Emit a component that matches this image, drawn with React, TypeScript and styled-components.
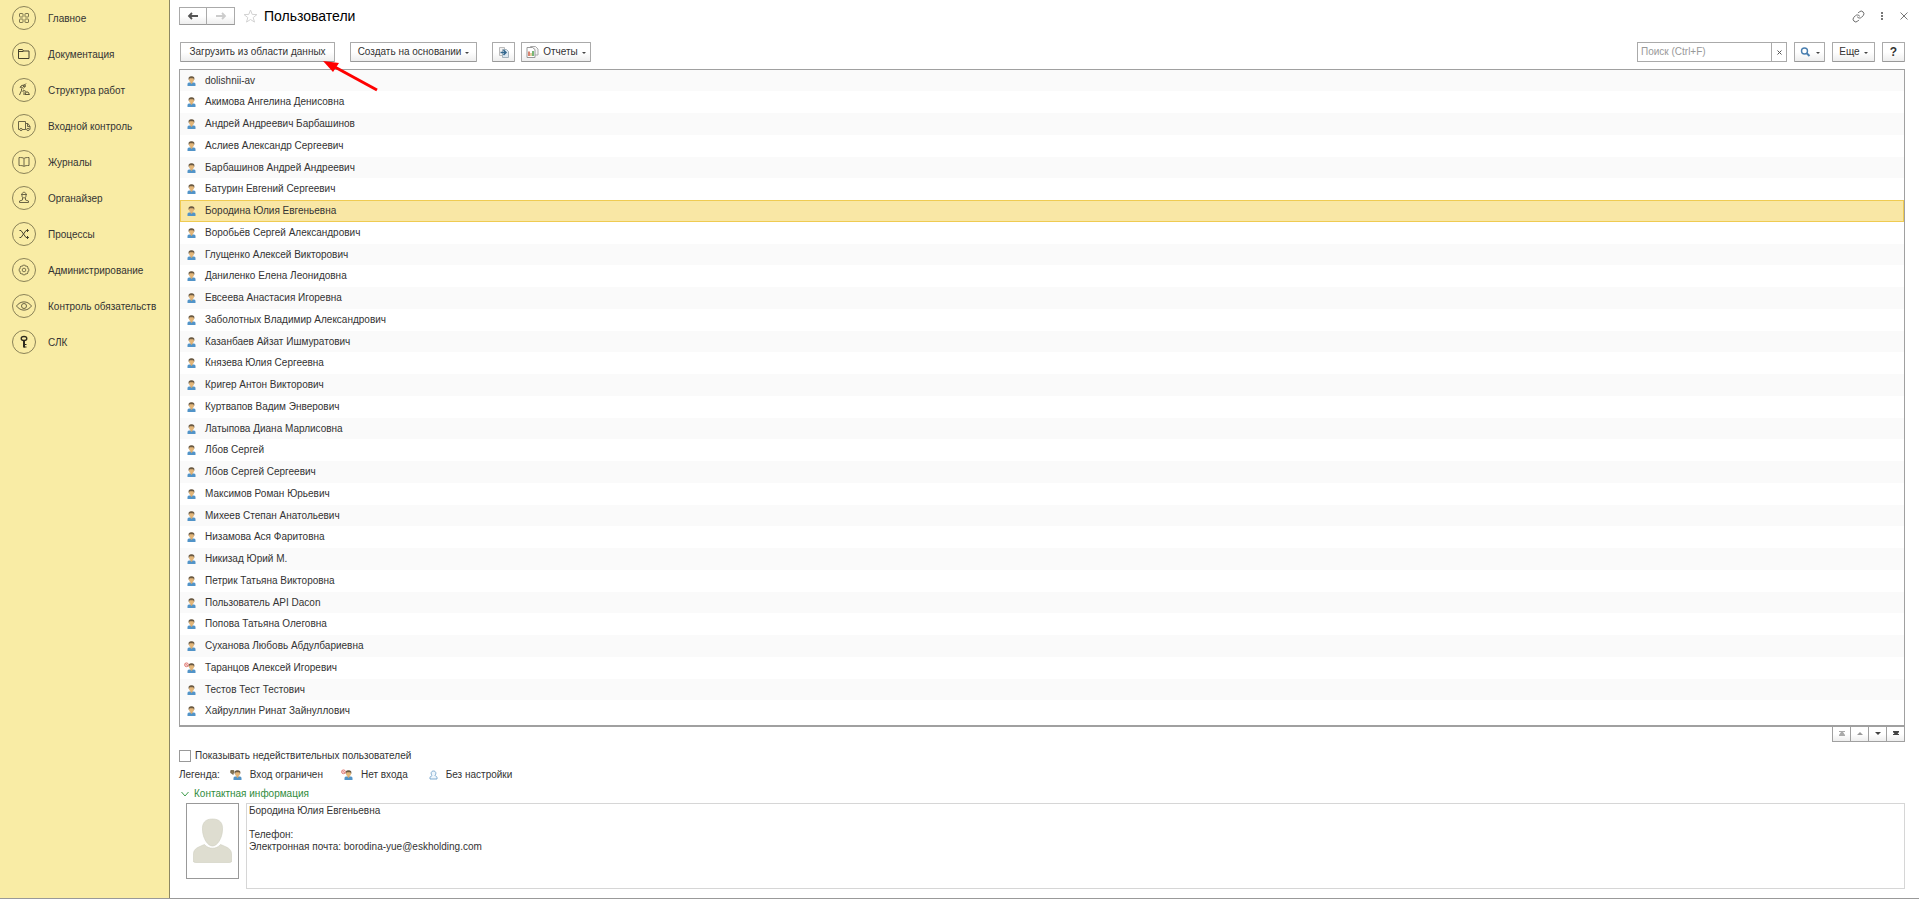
import React from 'react';
import styled, { createGlobalStyle, css } from 'styled-components';
import { Link } from 'lucide-react';

const GlobalStyle = createGlobalStyle`
  * { box-sizing: border-box; }
  body { margin: 0; background: #fff; }
  body, button, input, textarea { font: 10px/12px "Liberation Sans", Arial, sans-serif; color: #333; }
`;

const Page = styled.div`
  display: flex;
  min-height: 100vh;
  border-bottom: 1px solid #999;
`;

const Sidebar = styled.nav`
  flex: 0 0 170px;
  background: #f9eca5;
  border-right: 1px solid #8c8763;
`;

const MenuLink = styled.a`
  display: flex;
  align-items: center;
  gap: 12px;
  height: 36px;
  padding-left: 12px;
  color: #333;
  text-decoration: none;
  white-space: nowrap;
`;

const MenuIcon = styled.svg`
  flex: none;
  width: 24px;
  height: 24px;
  fill: none;
  stroke: #6b6546;
  stroke-width: 1;
`;

const MenuText = styled.span`
  padding-top: 2px;
`;

const Main = styled.main`
  flex: 1;
  min-width: 0;
  display: flex;
  flex-direction: column;
  padding: 7px 14px 9px 9px;
`;

const Header = styled.header`
  display: flex;
  align-items: center;
  height: 18px;
`;

const raised = css`
  border: 1px solid #aaa;
  border-bottom-color: #999;
  background: linear-gradient(#fff 50%, #eee);
  padding: 0;
`;

const NavGroup = styled.div`
  display: flex;
  margin-right: 8px;
`;

const NavButton = styled.button`
  ${raised}
  display: grid;
  place-items: center;
  width: 28px;
  height: 18px;
  & + & { border-left: 0; }
`;

const Plain = styled.button`
  display: grid;
  place-items: center;
  border: 0;
  padding: 0;
  background: none;
`;

const Title = styled.h1`
  flex: 1;
  margin: 0 0 0 6px;
  font-size: 14px;
  line-height: 18px;
  font-weight: 400;
  color: #000;
`;

const WindowTools = styled.div`
  display: flex;
  align-items: center;
  gap: 12px;
  margin-right: -4px;
`;

const Toolbar = styled.div`
  position: relative;
  display: flex;
  align-items: center;
  height: 20px;
  margin: 17px 0 7px 1px;
`;

const ToolButton = styled.button<{ $w: number; $gap?: number }>`
  ${raised}
  display: flex;
  align-items: center;
  justify-content: center;
  gap: 4px;
  width: ${p => p.$w}px;
  height: 20px;
  margin-right: ${p => p.$gap ?? 0}px;
  border-radius: 1px;
  white-space: nowrap;
`;

const Help = styled.span`
  font-size: 12px;
  font-weight: 700;
`;

const Caret = styled.span`
  width: 0;
  margin-top: 2px;
  border: 2px solid transparent;
  border-top-color: #444;
  border-bottom: 0;
`;

const Search = styled.div`
  display: flex;
  width: 150px;
  height: 20px;
  margin: 0 7px 0 auto;
  border: 1px solid #aaa;
`;

const SearchInput = styled.input`
  flex: 1;
  min-width: 0;
  border: 0;
  padding: 0 3px;
  outline: 0;
  &::placeholder { color: #999; opacity: 1; }
`;

const Clear = styled(Plain)`
  width: 15px;
  border-left: 1px solid #aaa;
`;

const Pointer = styled.svg`
  position: absolute;
  left: 143px;
  top: 18px;
  width: 56px;
  height: 32px;
  pointer-events: none;
`;

const List = styled.div`
  border: 1px solid #a0a0a0;
  border-bottom-width: 2px;
  padding-bottom: 3px;
`;

const Table = styled.table`
  width: 100%;
  border-collapse: collapse;
`;

const Row = styled.tr<{ $selected: boolean }>`
  height: 22px;
  &:nth-child(4n + 1) { height: 21px; }
  &:nth-child(odd) { background: #fafafa; }
  ${p => p.$selected && css`
    && { background: #f9e7a5; box-shadow: inset 0 0 0 1px #efcb52; }
  `}
`;

const IconCell = styled.td`
  width: 25px;
  padding: 0 0 0 4px;
  line-height: 0;
`;

const NameCell = styled.td`
  padding: 0;
`;

const Pager = styled.div`
  display: flex;
  align-self: flex-end;
  height: 15px;
`;

const PageButton = styled.button`
  ${raised}
  border-color: #a0a0a0;
  border-top: 0;
  display: grid;
  place-items: center;
  width: 19px;
  height: 15px;
  & + & { margin-left: -1px; }
`;

const CheckLabel = styled.label`
  display: flex;
  align-items: center;
  gap: 4px;
  height: 12px;
  margin-top: 8px;
`;

const Check = styled.input`
  appearance: none;
  width: 12px;
  height: 12px;
  margin: 0;
  border: 1px solid #999;
  background: #fff;
`;

const Legend = styled.div`
  display: flex;
  align-items: center;
  height: 14px;
  margin-top: 6px;
`;

const LegendItem = styled.span`
  display: flex;
  align-items: center;
  gap: 7px;
  margin-left: 10px;
  & + & { margin-left: 18px; }
`;

const Section = styled.button`
  display: flex;
  align-items: center;
  align-self: flex-start;
  gap: 5px;
  height: 14px;
  margin-top: 5px;
  padding: 0 0 0 2px;
  border: 0;
  background: none;
  color: #2f8c3c;
`;

const Contact = styled.section`
  flex: 1;
  display: flex;
  gap: 7px;
  padding: 2px 0 0 7px;
`;

const Photo = styled.div`
  width: 53px;
  height: 76px;
  border: 1px solid #999;
  display: grid;
  place-items: center;
`;

const Details = styled.textarea`
  flex: 1;
  min-height: 86px;
  padding: 1px 2px;
  border: 1px solid #d6d6d6;
  resize: none;
  outline: 0;
`;

const menu: [string, React.ReactNode][] = [
  ['Главное', <g key="i" stroke="#7d764f"><rect x="7.500" y="7.500" width="3.500" height="3.500" rx=".5" /><rect x="13" y="7.500" width="3.500" height="3.500" rx=".5" /><rect x="7.500" y="13" width="3.500" height="3.500" rx=".5" /><rect x="13" y="13" width="3.500" height="3.500" rx=".5" /></g>],
  ['Документация', <path key="i" stroke="#45412d" d="M6.500 7.500h4l1 1.500h5.500v7.500H6.500zM6.500 9.500h5" />],
  ['Структура работ', <g key="i" stroke="#5d573a"><path d="M8 10l1.500-2.500 3-.5 1.500-1.500M8.500 8.500l3 2M11 8.500l2 .5M9.500 10.500v2l-2 4.500M10 12.500l2 2v2.500M11 12l3 1.500M13 16.500l1-2.500h2l1.500 2.500z" /><circle cx="12.500" cy="8" r="1" /></g>],
  ['Входной контроль', <g key="i"><path d="M8 15.500H6.500v-8h7v8h-3.500M13.500 9.500h2.500l2 3v3h-.5M13.500 15.500h1" /><circle cx="9" cy="15.500" r="1.200" /><circle cx="16" cy="15.500" r="1.200" /><path d="M15.500 10v2.500H18" /></g>],
  ['Журналы', <path key="i" d="M12 8.500v7.500M12 8.500c-1-1-3-1-5-1v8c2 0 4 0 5 1 1-1 3-1 5-1v-8c-2 0-4 0-5 1z" />],
  ['Органайзер', <g key="i"><path d="M10 8.500c0-3 4-3 4 0v1.500c0 2.500-4 2.500-4 0zM9 8.500h6M10.500 11.500v2.500l-3 1v1.500h9V15l-3-1v-2.500" /></g>],
  ['Процессы', <path key="i" stroke="#45412d" d="M7.500 8.500h1.500l5 7h2.500M7.500 15.500h1.500l5-7h2.500M15 7l1.500 1.500L15 10M15 14l1.500 1.500L15 17" />],
  ['Администрирование', <g key="i" stroke="#7d764f"><path d="M10.800 7.200h2.400l.5 1.200 1.300-.4 1 1-.4 1.300 1.200.5v2.400l-1.200.5.4 1.300-1 1-1.300-.4-.5 1.200h-2.400l-.5-1.200-1.300.4-1-1 .4-1.300-1.200-.5v-2.400l1.200-.5L8 9l1-1 1.300.4z" /><circle cx="12" cy="12" r="1.800" /></g>],
  ['Контроль обязательств', <g key="i"><path d="M4.500 12c4-5.500 11-5.500 15 0-4 5.500-11 5.500-15 0z" /><circle cx="12" cy="12" r="2.500" /></g>],
  ['СЛК', <g key="i" stroke="#2e2b1e"><ellipse cx="12" cy="8.500" rx="2.800" ry="2" strokeWidth="1.300" /><path d="M12 10.500v7" strokeWidth="2" /><path d="M12 14.500h2.500M12 17h2.500" /></g>],
];

const users = [
  'dolishnii-av', 'Акимова Ангелина Денисовна', 'Андрей Андреевич Барбашинов', 'Аслиев Александр Сергеевич',
  'Барбашинов Андрей Андреевич', 'Батурин Евгений Сергеевич', 'Бородина Юлия Евгеньевна', 'Воробьёв Сергей Александрович',
  'Глущенко Алексей Викторович', 'Даниленко Елена Леонидовна', 'Евсеева Анастасия Игоревна', 'Заболотных Владимир Александрович',
  'Казанбаев Айзат Ишмуратович', 'Князева Юлия Сергеевна', 'Кригер Антон Викторович', 'Куртвапов Вадим Энверович',
  'Латыпова Диана Марлисовна', 'Лбов Сергей', 'Лбов Сергей Сергеевич', 'Максимов Роман Юрьевич', 'Михеев Степан Анатольевич',
  'Низамова Ася Фаритовна', 'Никизад Юрий М.', 'Петрик Татьяна Викторовна', 'Пользователь API Dacon', 'Попова Татьяна Олеговна',
  'Суханова Любовь Абдулбариевна', 'Таранцов Алексей Игоревич', 'Тестов Тест Тестович', 'Хайруллин Ринат Зайнуллович',
];

type Kind = 'normal' | 'limited' | 'denied' | 'empty';

const UserIcon = ({ kind = 'normal' }: { kind?: Kind }) => (
  <svg width="13" height="12" viewBox="0 0 13 12">
    {kind === 'empty' ? (
      <path d="M6 6.500C4.500 4.500 5 2 7.500 2s3 2.500 1.500 4.500c.3.700 2 .8 2 2V10H4V8.500c0-1.200 1.700-1.300 2-2z" fill="#eef6fc" stroke="#7fabd0" />
    ) : (
      <>
        <path d="M3.500 11V9q0-1.200 1.500-1.500h5q1.500.3 1.500 1.500v2z" fill="#5294c8" />
        <path d="M6.500 6.500h2v1.500l-1 1-1-1z" fill="#d8a867" />
        <ellipse cx="7.500" cy="4.600" rx="2.500" ry="2.700" fill="#e3b679" />
        <path d="M4.800 5C4 2.300 5.500 1.300 7.500 1.300s3.500 1 2.700 3.700L9.200 3.200H5.800z" fill="#6b5a42" />
      </>
    )}
    {kind === 'denied' && <g fill="#fbe6e4" stroke="#e07d76"><circle cx="2.500" cy="2.800" r="1.900" /><path d="M1.300 1.600l2.400 2.400" /></g>}
    {kind === 'limited' && <path d="M.8 1.500h3v2.500h-3zM.8 2.700h3M2 4v1h2" fill="#b09a70" stroke="#6b5c40" strokeWidth=".8" />}
  </svg>
);

const Arrow = ({ flip = false, color }: { flip?: boolean; color: string }) => (
  <svg width="12" height="8" viewBox="0 0 12 8" fill="none" stroke={color} strokeWidth="1.800">
    <path d={flip ? 'M1 4h9M7 1l3 3-3 3' : 'M11 4H2M5 1L2 4l3 3'} />
  </svg>
);

const pagerShapes: [string, string, string][] = [
  ['В начало', '#aaa', 'M1 0h6v1H5l2 3v1H1V4l2-3H1z'],
  ['Вверх', '#999', 'M1 4l3-3 3 3z'],
  ['Вниз', '#444', 'M1 1h6L4 4z'],
  ['В конец', '#444', 'M1 0h6v1L5.500 3H7v1H1V3h1.500L1 1z'],
];

export default function App() {
  return (
    <>
      <GlobalStyle />
      <Page>
        <Sidebar>
          {menu.map(([label, icon]) => (
            <MenuLink href="#" key={label}>
              <MenuIcon viewBox="0 0 24 24"><circle cx="12" cy="12" r="11.500" stroke="#8a8258" />{icon}</MenuIcon>
              <MenuText>{label}</MenuText>
            </MenuLink>
          ))}
        </Sidebar>
        <Main>
          <Header>
            <NavGroup>
              <NavButton aria-label="Назад"><Arrow color="#555" /></NavButton>
              <NavButton aria-label="Вперед"><Arrow flip color="#ccc" /></NavButton>
            </NavGroup>
            <Plain aria-label="Избранное">
              <svg width="15" height="14" viewBox="0 0 15 14" fill="none" stroke="#d2d2d2"><path d="M7.500 1l1.700 4.400 4.700.2-3.700 3 1.300 4.500-4-2.600-4 2.600 1.300-4.500-3.700-3 4.700-.2z" /></svg>
            </Plain>
            <Title>Пользователи</Title>
            <WindowTools>
              <Plain aria-label="Ссылка"><Link size={13} color="#666" strokeWidth={1.8} /></Plain>
              <Plain aria-label="Меню">
                <svg width="10" height="10" viewBox="0 0 10 10" fill="#777"><path d="M4 1h2v2H4zM4 4h2v2H4zM4 7h2v2H4z" /></svg>
              </Plain>
              <Plain aria-label="Закрыть">
                <svg width="10" height="10" viewBox="0 0 10 10" stroke="#777"><path d="M1.500 1.500l7 7M8.500 1.500l-7 7" /></svg>
              </Plain>
            </WindowTools>
          </Header>
          <Toolbar>
            <ToolButton $w={155} $gap={15}>Загрузить из области данных</ToolButton>
            <ToolButton $w={127} $gap={15}>Создать на основании <Caret /></ToolButton>
            <ToolButton $w={23} $gap={6} aria-label="Перейти">
              <svg width="12" height="11" viewBox="0 0 12 11"><path d="M1.500.5h5v8h-5z" fill="#f2f2f2" stroke="#bbb" /><path d="M4.500 2.500h4l2 2v6h-6z" fill="#dde8f1" stroke="#a3b2bd" /><path d="M2.500 5.500h5M5.500 3l2.500 2.500L5.500 8" fill="none" stroke="#34688f" strokeWidth="1.500" /></svg>
            </ToolButton>
            <ToolButton $w={70}>
              <svg width="13" height="12" viewBox="0 0 13 12"><path d="M4.500.5h5l2.500 2.500v6h-7.500z" fill="#f6f6f6" stroke="#aaa" /><path d="M1 1.500h5.500l2.500 2v8H1z" fill="#fff" stroke="#999" /><path d="M3 5.500V10" stroke="#cc5b42" strokeWidth="1.500" /><path d="M5 7v3" stroke="#c9a03e" /><path d="M7 5v5" stroke="#4a9e4a" strokeWidth="1.500" /></svg>
              Отчеты <Caret />
            </ToolButton>
            <Search>
              <SearchInput aria-label="Поиск" placeholder="Поиск (Ctrl+F)" />
              <Clear aria-label="Очистить"><svg width="5" height="5" viewBox="0 0 5 5" stroke="#555"><path d="M.5.5l4 4M4.500.5l-4 4" /></svg></Clear>
            </Search>
            <ToolButton $w={31} $gap={7} aria-label="Найти">
              <svg width="12" height="10" viewBox="0 0 12 10" fill="none" stroke="#4a7fb0"><circle cx="4.500" cy="4" r="3" strokeWidth="1.400" /><path d="M6.500 6l3 3" strokeWidth="2" /></svg>
              <Caret />
            </ToolButton>
            <ToolButton $w={43} $gap={7}>Еще <Caret /></ToolButton>
            <ToolButton $w={23}><Help>?</Help></ToolButton>
            <Pointer viewBox="0 0 56 32"><path d="M54 30L10 6" stroke="#f00" strokeWidth="3" /><path d="M0 1l16 2-6 9z" fill="#f00" /></Pointer>
          </Toolbar>
          <List>
            <Table>
              <tbody>
                {users.map(name => (
                  <Row key={name} $selected={name === 'Бородина Юлия Евгеньевна'}>
                    <IconCell><UserIcon kind={name === 'Таранцов Алексей Игоревич' ? 'denied' : 'normal'} /></IconCell>
                    <NameCell>{name}</NameCell>
                  </Row>
                ))}
              </tbody>
            </Table>
          </List>
          <Pager>
            {pagerShapes.map(([label, color, d]) => (
              <PageButton key={label} aria-label={label}><svg width="8" height="6" viewBox="0 0 8 6"><path d={d} fill={color} /></svg></PageButton>
            ))}
          </Pager>
          <CheckLabel><Check type="checkbox" />Показывать недействительных пользователей</CheckLabel>
          <Legend>
            Легенда:
            <LegendItem><UserIcon kind="limited" />Вход ограничен</LegendItem>
            <LegendItem><UserIcon kind="denied" />Нет входа</LegendItem>
            <LegendItem><UserIcon kind="empty" />Без настройки</LegendItem>
          </Legend>
          <Section aria-expanded="true">
            <svg width="8" height="6" viewBox="0 0 8 6" fill="none" stroke="#3f9c4c"><path d="M.5 1L4 5l3.500-4" /></svg>
            Контактная информация
          </Section>
          <Contact>
            <Photo>
              <svg width="39" height="46" viewBox="0 0 39 46" fill="#deddd0" stroke="#cfcebf" strokeWidth=".6"><path d="M19.500 1C27 1 30 5 29.500 12c-.3 8-5 16-10 16S9.800 20 9.500 12C9 5 12 1 19.500 1z" /><path d="M11.500 26.500c4 5 12 5 16 0 7 3 10.500 4 11 9l.3 7q0 2-2 2H2.200q-2 0-2-2l.3-7c.5-5 4-6 11-9z" /></svg>
            </Photo>
            <Details aria-label="Контактная информация" readOnly value={'Бородина Юлия Евгеньевна\n\nТелефон:\nЭлектронная почта: borodina-yue@eskholding.com'} />
          </Contact>
        </Main>
      </Page>
    </>
  );
}
